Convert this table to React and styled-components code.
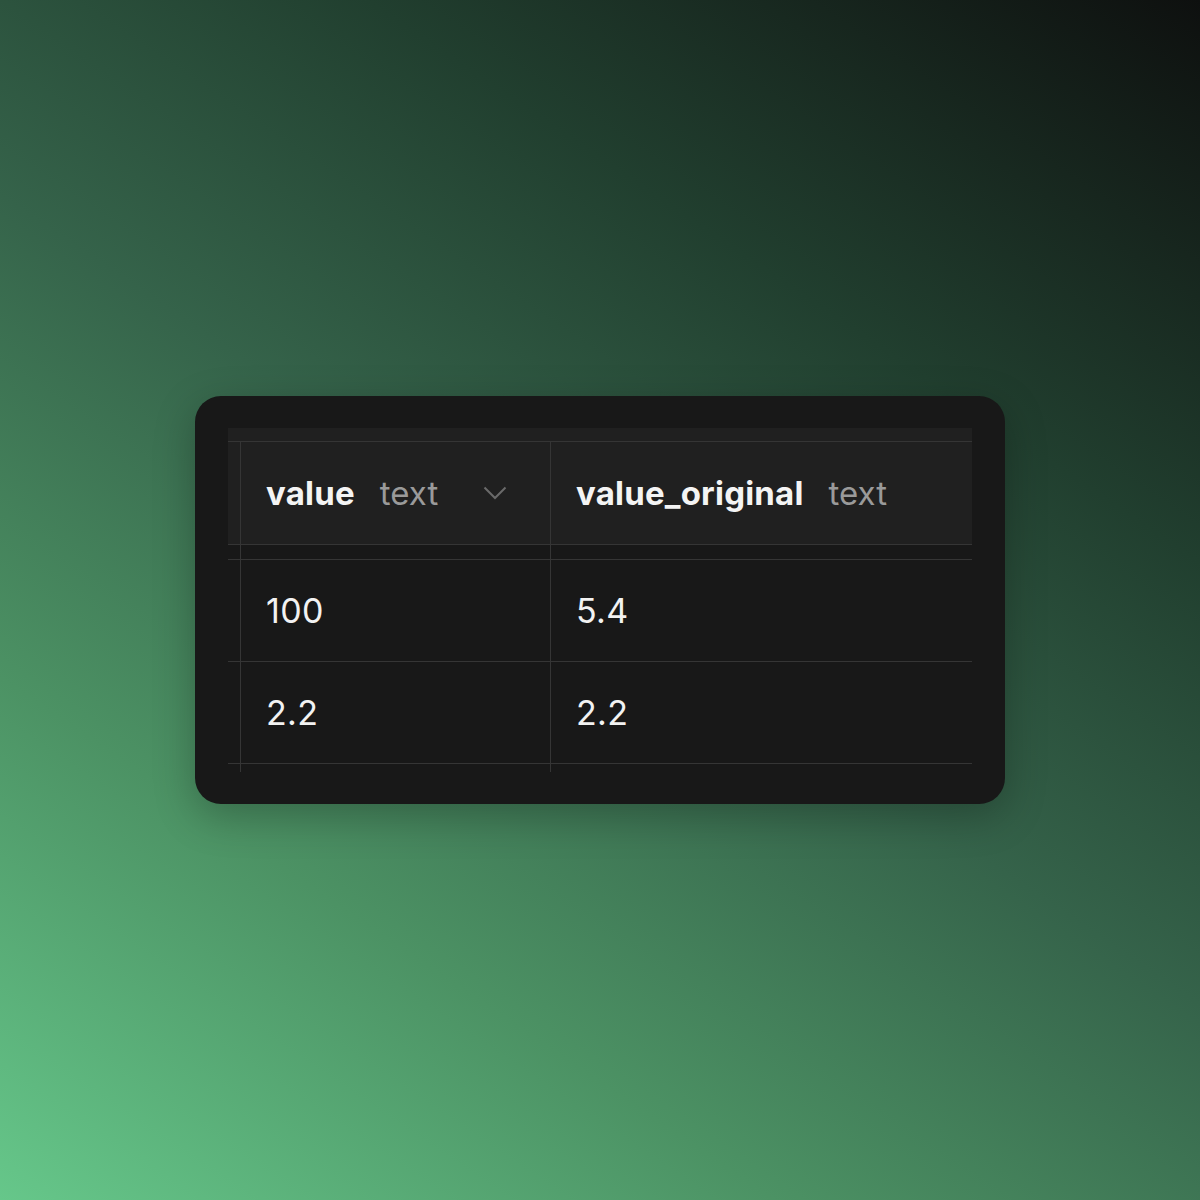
import React from "react";
import styled, { createGlobalStyle } from "styled-components";

const Global = createGlobalStyle`
  html, body { margin: 0; padding: 0; }
  body { font-family: Inter, "Noto Sans", sans-serif; }
`;

const Page = styled.div`
  width: 1200px;
  height: 1200px;
  display: flex;
  align-items: center;
  justify-content: center;
  background: linear-gradient(34deg, #66c78a 0%, #4c9264 26%, #35634a 50%, #213f2f 72%, #0e100f 100%);
`;

const Card = styled.div`
  width: 810px;
  height: 408px;
  box-sizing: border-box;
  padding: 32px 33px;
  background: #181818;
  border-radius: 26px;
  box-shadow: 0 12px 40px rgba(0, 0, 0, 0.25);
`;

const Table = styled.div`
  display: flex;
  flex-direction: column;
  width: 744px;
`;

const LINE = "#353535";

const HeaderCap = styled.div`
  height: 13px;
  background: #202020;
  border-bottom: 1px solid ${LINE};
`;

const Row = styled.div`
  display: grid;
  grid-template-columns: 12px 310px 1fr;
  height: ${(p) => p.$h}px;
  background: ${(p) => (p.$head ? "#202020" : "transparent")};
  border-bottom: ${(p) => (p.$noBorder ? "none" : `1px solid ${LINE}`)};
`;

const Stub = styled.div``;

const Cell = styled.div`
  display: flex;
  align-items: center;
  border-left: 1px solid ${LINE};
  padding-left: 25px;
  min-width: 0;
`;

const ColName = styled.span`
  color: #f4f4f4;
  font-size: 33px;
  font-weight: 700;
  letter-spacing: 0.2px;
`;

const ColType = styled.span`
  color: #9a9a9a;
  font-size: 33px;
  font-weight: 400;
  margin-left: 25px;
`;

const Chevron = styled.svg`
  margin-left: 45px;
  width: 24px;
  height: 14px;
`;

const Value = styled.span`
  color: #f2f2f2;
  font-size: 34px;
  font-weight: 400;
  letter-spacing: 0.3px;
`;

const columns = [
  { name: "value", type: "text", menu: true },
  { name: "value_original", type: "text" },
];

const rows = [
  ["100", "5.4"],
  ["2.2", "2.2"],
];

export default function App() {
  return (
    <Page>
      <Global />
      <Card>
        <Table>
          <HeaderCap />
          <Row $head $h={102}>
            <Stub />
            {columns.map((c) => (
              <Cell key={c.name}>
                <ColName>{c.name}</ColName>
                <ColType>{c.type}</ColType>
                {c.menu && (
                  <Chevron viewBox="0 0 24 14" fill="none">
                    <path d="M1.5 1.5 L12 12 L22.5 1.5" stroke="#6a6a6a" strokeWidth="2" />
                  </Chevron>
                )}
              </Cell>
            ))}
          </Row>
          <Row $h={14}>
            <Stub />
            <Cell />
            <Cell />
          </Row>
          {rows.map((r, i) => (
            <Row key={i} $h={101}>
              <Stub />
              {r.map((v, j) => (
                <Cell key={j}>
                  <Value>{v}</Value>
                </Cell>
              ))}
            </Row>
          ))}
          <Row $h={8} $noBorder>
            <Stub />
            <Cell />
            <Cell />
          </Row>
        </Table>
      </Card>
    </Page>
  );
}
